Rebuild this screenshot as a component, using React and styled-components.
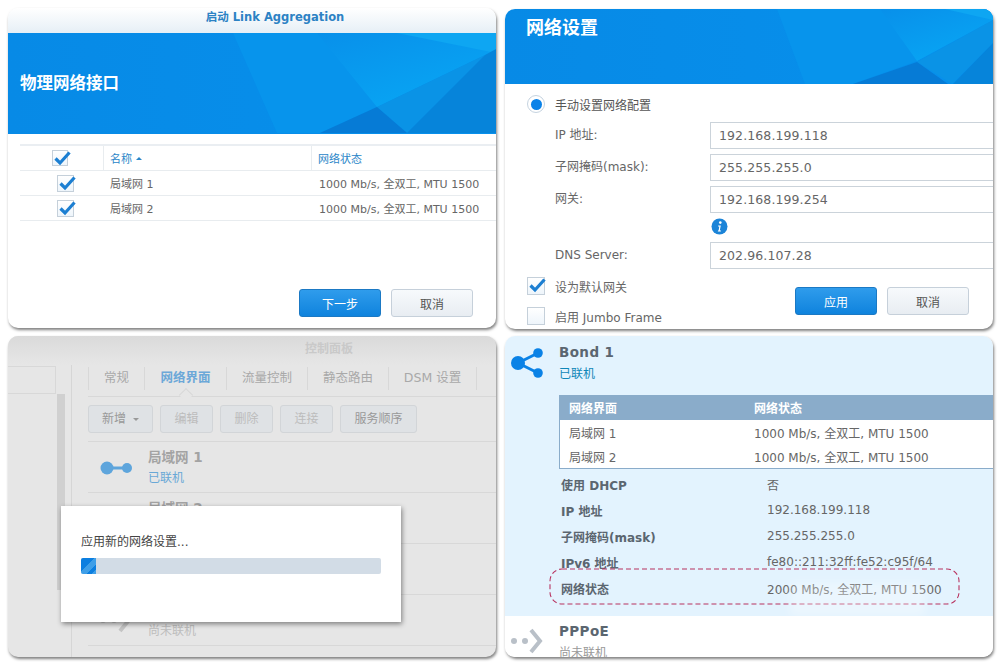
import React from 'react';
import styled, { createGlobalStyle } from 'styled-components';

const GlobalStyle = createGlobalStyle`
  html, body { margin: 0; padding: 0; background: #fff; }
  body { font-family: "DejaVu Sans", "Noto Sans CJK SC", sans-serif; color: #555; }
`;

const Page = styled.div`
  display: grid;
  grid-template-columns: 488px 488px;
  grid-template-rows: 321px 321px;
  column-gap: 9px;
  row-gap: 7px;
  padding: 8px;
  width: 1000px;
  height: 667px;
  box-sizing: border-box;
  overflow: hidden;
`;

const Panel = styled.section`
  position: relative;
  display: flex;
  flex-direction: column;
  height: ${p => p.$h || 321}px;
  margin-top: ${p => p.$top || 0}px;
  border-radius: 10px;
  overflow: hidden;
  background: ${p => p.$bg || '#fff'};
  box-shadow: 1px 2px 3px rgba(0, 0, 0, 0.5);
`;

const TitleBar = styled.div`
  flex: none;
  height: 25px;
  padding: 0 0 0 46px;
  line-height: 18px;
  text-align: center;
  font-size: 11.5px;
  font-weight: 700;
  color: #2c82c4;
  background: linear-gradient(#fff, #e6eff6);
`;

const Banner = styled.div`
  position: relative;
  flex: none;
  box-sizing: border-box;
  height: ${p => p.$h}px;
  display: flex;
  align-items: ${p => p.$align};
  padding: ${p => p.$pad};
  overflow: hidden;
  background: linear-gradient(90deg, #078ae6, #0790ec);
`;

const BannerArt = styled.svg`
  position: absolute;
  left: 0;
  top: 0;
  width: 100%;
  height: 100%;
`;

const BannerTitle = styled.h2`
  position: relative;
  margin: 0;
  font-size: ${p => p.$size}px;
  line-height: 1.2;
  font-weight: 700;
  color: #fff;
`;

const Table = styled.div`
  margin: 10px 0 0 12px;
  border-top: 2px solid #eaeef2;
  font-size: 11px;
`;

const TableRow = styled.div`
  display: grid;
  box-sizing: border-box;
  grid-template-columns: 83px 208px 1fr;
  align-items: center;
  height: ${p => p.$h}px;
  border-bottom: 1px solid #e8ecef;
`;

const CheckCell = styled.div`
  display: flex;
  padding-left: ${p => p.$indent}px;
`;

const NameCell = styled.div`
  padding-left: ${p => p.$pad}px;
  color: ${p => (p.$head ? '#2a86c8' : '#666')};
  align-self: stretch;
  display: flex;
  align-items: center;
  gap: 4px;
  border-left: ${p => (p.$head ? '1px solid #e8ecef' : '1px solid transparent')};
`;

const SortMark = styled.span`
  width: 0;
  height: 0;
  border: 3px solid transparent;
  border-top: 0;
  border-bottom: 3px solid #2a86c8;
`;

const Footer = styled.div`
  margin-top: auto;
  display: flex;
  justify-content: flex-end;
  gap: 10px;
  padding: 0 23px 11px 0;
`;

const Button = styled.button`
  width: 82px;
  height: 28px;
  padding: 0;
  border-radius: 3px;
  font: 12px "DejaVu Sans", "Noto Sans CJK SC", sans-serif;
  border: 1px solid ${p => (p.$primary ? '#1b79c4' : '#c6d0da')};
  color: ${p => (p.$primary ? '#fff' : '#555')};
  background: ${p => (p.$primary ? 'linear-gradient(#2f9cec, #0f83dd)' : 'linear-gradient(#f7fafc, #e8edf2)')};
`;

const Box = styled.span`
  position: relative;
  display: block;
  flex: none;
  box-sizing: border-box;
  width: ${p => p.$size}px;
  height: ${p => p.$size}px;
  border: 1px solid #c5d0da;
  background: linear-gradient(#fff, #eef5fb);
`;

const Tick = styled.svg`
  position: absolute;
  left: 0;
  top: -2px;
  width: 21px;
  height: 18px;
  overflow: visible;
`;

const Form = styled.div`
  display: flex;
  flex-direction: column;
  flex: 1;
  padding-top: 11px;
`;

const RadioRow = styled.div`
  display: flex;
  align-items: center;
  gap: 10px;
  margin-left: 22px;
  height: 18px;
  font-size: 12px;
  color: #555;
`;

const Radio = styled.span`
  box-sizing: border-box;
  display: flex;
  align-items: center;
  justify-content: center;
  width: 18px;
  height: 18px;
  border-radius: 50%;
  border: 1px solid #c5d3e0;
  background: #fff;
  &::after {
    content: "";
    width: 11px;
    height: 11px;
    border-radius: 50%;
    background: #0a82e8;
  }
`;

const FormGrid = styled.div`
  display: grid;
  grid-template-columns: 155px 1fr;
  row-gap: 5px;
  margin: 9px 0 0 50px;
  font-size: 12px;
`;

const FormLabel = styled.div`
  line-height: 26px;
  color: #666;
  white-space: nowrap;
`;

const Field = styled.div`
  box-sizing: border-box;
  height: 27px;
  line-height: 26px;
  padding-left: 8px;
  border: 1px solid #cbd3da;
  border-right: 0;
  background: #fff;
  color: #666;
  font-size: 12.5px;
  letter-spacing: 0.1px;
`;

const InfoRow = styled.div`
  grid-column: 2;
  height: 17px;
  margin: 0 0 2px 1px;
  display: flex;
  align-items: center;
`;

const Bottom = styled.div`
  display: flex;
  justify-content: space-between;
  margin-top: 8px;
  padding: 0 24px 0 22px;
`;

const CheckList = styled.div`
  display: flex;
  flex-direction: column;
  gap: 12px;
`;

const CheckRow = styled.div`
  display: flex;
  align-items: center;
  gap: 10px;
  height: 18px;
  font-size: 12px;
  color: #666;
`;

const BottomActions = styled.div`
  display: flex;
  gap: 10px;
  padding-top: 10px;
`;

/* control panel behind the progress dialog */
const DimBar = styled.div`
  flex: none;
  height: 29px;
  padding-left: 154px;
  line-height: 26px;
  text-align: center;
  font-size: 12px;
  font-weight: 700;
  color: #c9c9c9;
  background: linear-gradient(#dadada, #e6e6e6);
`;

const DimBody = styled.div`
  flex: 1;
  display: flex;
  min-height: 0;
`;

const Side = styled.div`
  flex: none;
  width: 63px;
  display: flex;
  flex-direction: column;
  border-right: 1px solid #d6d6d6;
`;

const SearchBox = styled.div`
  box-sizing: border-box;
  flex: none;
  width: 48px;
  height: 28px;
  margin-top: 1px;
  border: 1px solid #d8d8d8;
  border-left: 0;
`;

const SideTrack = styled.div`
  display: flex;
  justify-content: flex-end;
  padding-right: 6px;
  height: 196px;
`;

const SideThumb = styled.div`
  width: 8px;
  background: #d0d0d0;
`;

const Main = styled.div`
  flex: 1;
  margin-left: 16px;
  display: flex;
  flex-direction: column;
  min-width: 0;
`;

const Tabs = styled.div`
  flex: none;
  display: flex;
  height: 31px;
  border-bottom: 1px solid #d8d8d8;
`;

const Tab = styled.div`
  position: relative;
  box-sizing: border-box;
  width: ${p => p.$w}px;
  margin: 2px 0 6px;
  line-height: 22px;
  text-align: center;
  font-size: 12.5px;
  font-weight: ${p => (p.$active ? 700 : 400)};
  color: ${p => (p.$active ? '#6ca8d8' : '#a9a9a9')};
  border-right: 1px solid #d8d8d8;
  border-left: ${p => (p.$first ? '1px solid #d8d8d8' : '0')};
  &::after {
    content: "";
    display: ${p => (p.$active ? 'block' : 'none')};
    position: absolute;
    left: 50%;
    bottom: -10px;
    width: 9px;
    height: 9px;
    margin-left: -5px;
    background: #e6e6e6;
    border-top: 1px solid #d8d8d8;
    border-left: 1px solid #d8d8d8;
    transform: rotate(45deg);
  }
`;

const Toolbar = styled.div`
  flex: none;
  display: flex;
  gap: 7px;
  padding: 8px 0;
  border-bottom: 1px solid #d8d8d8;
`;

const DimButton = styled.div`
  box-sizing: border-box;
  width: ${p => p.$w}px;
  height: 28px;
  line-height: 26px;
  text-align: center;
  font-size: 12px;
  border: 1px solid #d2d5d8;
  border-radius: 3px;
  background: #dfe2e5;
  color: ${p => (p.$off ? '#bcbcbc' : '#999')};
`;

const Caret = styled.span`
  display: inline-block;
  vertical-align: middle;
  margin-left: 7px;
  border: 3px solid transparent;
  border-bottom: 0;
  border-top: 3px solid #999;
`;

const LanItem = styled.div`
  flex: none;
  height: 51px;
  box-sizing: border-box;
  display: flex;
  gap: 15px;
  padding: 6px 0 0 12px;
  border-bottom: 1px solid #d8d8d8;
`;

const LanIconBox = styled.div`
  flex: none;
  width: 33px;
  padding-top: ${p => p.$top}px;
`;

const LanTitle = styled.div`
  font-size: 13.5px;
  line-height: 18px;
  font-weight: 700;
  color: #a3a3a3;
`;

const LanState = styled.div`
  margin-top: 4px;
  font-size: 12px;
  line-height: 16px;
  color: ${p => (p.$on ? '#69a8d6' : '#bdbdbd')};
`;

const Dialog = styled.div`
  position: absolute;
  left: 53px;
  top: 170px;
  box-sizing: border-box;
  width: 340px;
  height: 116px;
  padding: 26px 20px 0;
  background: #fff;
  box-shadow: 1px 2px 5px rgba(0, 0, 0, 0.45);
  font-size: 12px;
  color: #444;
`;

const Progress = styled.div`
  height: 16px;
  margin-top: 9px;
  border-radius: 2px;
  overflow: hidden;
  background: #d2dce6;
`;

const ProgressFill = styled.div`
  height: 100%;
  background: linear-gradient(135deg, #0c7fe0 0 45%, #3f9fe8 45% 70%, #0c7fe0 70% 85%, #3f9fe8 85%);
`;

/* bond detail */
const BondSection = styled.div`
  position: relative;
  flex: none;
  height: 280px;
  box-sizing: border-box;
  padding-top: 7px;
  background: #e3f3fe;
`;

const ItemHead = styled.div`
  display: flex;
  gap: 16px;
  padding-left: 6px;
`;

const ItemIcon = styled.div`
  flex: none;
  width: 32px;
  padding-top: ${p => p.$top}px;
`;

const ItemTitle = styled.div`
  font-size: 13.5px;
  line-height: 18px;
  font-weight: 700;
  letter-spacing: 0.4px;
  color: #5b6670;
`;

const ItemState = styled.div`
  margin-top: 5px;
  font-size: 12px;
  line-height: 16px;
  color: ${p => p.$color};
`;

const BondTable = styled.div`
  margin: 13px 0 0 54px;
  background: #fff;
  border-left: 1px solid #8aacca;
  border-bottom: 1px solid #8aacca;
  font-size: 12px;
`;

const BondRow = styled.div`
  display: grid;
  grid-template-columns: 185px 1fr;
  align-items: center;
  height: ${p => p.$h}px;
  padding-left: 9px;
  color: ${p => (p.$head ? '#fff' : '#666')};
  font-weight: ${p => (p.$head ? 700 : 400)};
  background: ${p => (p.$head ? '#8aacca' : 'transparent')};
`;

const InfoList = styled.div`
  margin: 2px 0 0 56px;
`;

const Info = styled.div`
  position: relative;
  display: grid;
  grid-template-columns: 206px 1fr;
  align-items: center;
  height: 26px;
  font-size: 12px;
  color: #666;
`;

const InfoKey = styled.div`
  font-weight: 700;
  color: #5b6670;
`;

const MarkRing = styled.svg`
  position: absolute;
  left: -12px;
  top: -7px;
`;

const Watermark = styled.div`
  position: absolute;
  left: 285px;
  top: 246px;
  width: 135px;
  height: 34px;
  background: rgba(255, 255, 255, 0.3);
  filter: blur(5px);
`;

const PppoeSection = styled.div`
  flex: 1;
  padding-top: 6px;
  background: #fff;
`;

const CheckBox = ({ size = 17, on = true }) => (
  <Box $size={size}>
    {on && (
      <Tick viewBox="0 0 21 18">
        <path d="M2.5 9.5 L7 14 L16.5 3.5" fill="none" stroke="#1c7fd2" strokeWidth="3.2" />
      </Tick>
    )}
  </Box>
);

const Art = ({ id, w, h, shapes }) => (
  <BannerArt viewBox={`0 0 ${w} ${h}`} preserveAspectRatio="none">
    <defs>
      <linearGradient id={id} x1="0" y1="0" x2="0.7" y2="1">
        <stop offset="0" stopColor="#0890ea" />
        <stop offset="1" stopColor="#08a6f4" />
      </linearGradient>
    </defs>
    {shapes.map(([points, fill]) => (
      <polygon key={points} points={points} fill={fill === 'glow' ? `url(#${id})` : fill} />
    ))}
  </BannerArt>
);

const wizardArt = [
  ['225,0 488,0 488,20 477,22 369,74 312,100 269,100', '#0794ec'],
  ['309,0 488,0 488,20 477,22 369,74', 'glow'],
  ['389,0 488,0 488,20', '#0ea6f2'],
  ['369,74 477,22 399,100', '#0a93e6'],
  ['312,100 369,74 399,100', '#067bd6'],
  ['399,100 477,22 488,16 488,100', '#0684da'],
];

const settingsArt = [
  ['272,0 488,0 488,11 412,52 348,75 300,75', '#0794ec'],
  ['375,0 488,0 488,11 412,52', 'glow'],
  ['440,0 488,0 488,11', '#0ea6f2'],
  ['412,53 488,11 488,34 447,75', '#0a93e6'],
  ['348,75 412,53 443,75', '#067bd6'],
  ['448,75 488,34 488,75', '#0684da'],
];

const LanIcon = () => (
  <svg width="33" height="16" viewBox="0 0 33 16">
    <circle cx="7" cy="8" r="6.5" fill="#5ea5dc" />
    <circle cx="27" cy="8" r="5" fill="#5ea5dc" />
    <rect x="7" y="6.5" width="20" height="3" fill="#5ea5dc" />
  </svg>
);

const ShareIcon = () => (
  <svg width="32" height="30" viewBox="0 0 32 30">
    <path d="M7 15 L27 5 M7 15 L27 25" stroke="#0a82e6" strokeWidth="3" fill="none" />
    <circle cx="7" cy="15" r="7" fill="#0a82e6" />
    <circle cx="27" cy="5" r="4.8" fill="#0a82e6" />
    <circle cx="27" cy="25" r="4.8" fill="#0a82e6" />
  </svg>
);

const ArrowIcon = ({ color = '#b9c0c8' }) => (
  <svg width="32" height="26" viewBox="0 0 32 26">
    <circle cx="3" cy="13" r="3" fill={color} />
    <circle cx="14" cy="13" r="3" fill={color} />
    <path d="M20 2 L29 13 L20 24" stroke={color} strokeWidth="4" fill="none" />
  </svg>
);

const InfoIcon = () => (
  <svg width="17" height="17" viewBox="0 0 17 17">
    <circle cx="8.5" cy="8.5" r="8" fill="#1b84d8" />
    <circle cx="9.3" cy="4.6" r="1.3" fill="#fff" />
    <path d="M7.2 7.6 H9.8 L8.8 12.4 H10 L9.8 13.4 H6.8 L7 12.4 H7.6 L8.3 8.6 H7 Z" fill="#fff" />
  </svg>
);

const nics = [
  ['局域网 1', '1000 Mb/s, 全双工, MTU 1500'],
  ['局域网 2', '1000 Mb/s, 全双工, MTU 1500'],
];

const fields = [
  ['IP 地址:', '192.168.199.118'],
  ['子网掩码(mask):', '255.255.255.0'],
  ['网关:', '192.168.199.254'],
];

const tabs = [['常规', 57], ['网络界面', 82, true], ['流量控制', 81], ['静态路由', 81], ['DSM 设置', 88]];

const bondInfo = [
  ['使用 DHCP', '否'],
  ['IP 地址', '192.168.199.118'],
  ['子网掩码(mask)', '255.255.255.0'],
  ['IPv6 地址', 'fe80::211:32ff:fe52:c95f/64'],
];

const App = () => (
  <>
    <GlobalStyle />
    <Page>
      <Panel $h={320}>
        <TitleBar>启动 Link Aggregation</TitleBar>
        <Banner $h={101} $align="center" $pad="1px 0 0 12px">
          <Art id="wizardGlow" w={488} h={101} shapes={wizardArt} />
          <BannerTitle $size={16.5}>物理网络接口</BannerTitle>
        </Banner>
        <Table>
          <TableRow $h={25}>
            <CheckCell $indent={32}><CheckBox size={16} /></CheckCell>
            <NameCell $head $pad={6}>名称 <SortMark /></NameCell>
            <NameCell $head $pad={6}>网络状态</NameCell>
          </TableRow>
          {nics.map(([name, status]) => (
            <TableRow $h={25} key={name}>
              <CheckCell $indent={37}><CheckBox /></CheckCell>
              <NameCell $pad={6}>{name}</NameCell>
              <NameCell $pad={7}>{status}</NameCell>
            </TableRow>
          ))}
        </Table>
        <Footer>
          <Button $primary>下一步</Button>
          <Button>取消</Button>
        </Footer>
      </Panel>

      <Panel $h={320} $top={1}>
        <Banner $h={75} $align="flex-start" $pad="8px 0 0 21px">
          <Art id="settingsGlow" w={488} h={75} shapes={settingsArt} />
          <BannerTitle $size={18}>网络设置</BannerTitle>
        </Banner>
        <Form>
          <RadioRow><Radio />手动设置网络配置</RadioRow>
          <FormGrid>
            {fields.map(([label, value]) => (
              <React.Fragment key={label}>
                <FormLabel>{label}</FormLabel>
                <Field>{value}</Field>
              </React.Fragment>
            ))}
            <InfoRow><InfoIcon /></InfoRow>
            <FormLabel>DNS Server:</FormLabel>
            <Field>202.96.107.28</Field>
          </FormGrid>
          <Bottom>
            <CheckList>
              <CheckRow><CheckBox size={18} />设为默认网关</CheckRow>
              <CheckRow><CheckBox size={18} on={false} />启用 Jumbo Frame</CheckRow>
            </CheckList>
            <BottomActions>
              <Button $primary>应用</Button>
              <Button>取消</Button>
            </BottomActions>
          </Bottom>
        </Form>
      </Panel>

      <Panel $bg="#e6e6e6">
        <DimBar>控制面板</DimBar>
        <DimBody>
          <Side>
            <SearchBox />
            <SideTrack><SideThumb /></SideTrack>
          </Side>
          <Main>
            <Tabs>
              {tabs.map(([label, w, active], i) => (
                <Tab key={label} $w={w} $active={active} $first={i === 0}>{label}</Tab>
              ))}
            </Tabs>
            <Toolbar>
              <DimButton $w={65}>新增<Caret /></DimButton>
              <DimButton $w={53} $off>编辑</DimButton>
              <DimButton $w={53} $off>删除</DimButton>
              <DimButton $w={53} $off>连接</DimButton>
              <DimButton $w={77}>服务顺序</DimButton>
            </Toolbar>
            <LanItem>
              <LanIconBox $top={12}><LanIcon /></LanIconBox>
              <div>
                <LanTitle>局域网 1</LanTitle>
                <LanState $on>已联机</LanState>
              </div>
            </LanItem>
            <LanItem>
              <LanIconBox $top={12} />
              <div>
                <LanTitle>局域网 2</LanTitle>
                <LanState $on>已联机</LanState>
              </div>
            </LanItem>
            <LanItem />
            <LanItem>
              <LanIconBox $top={6}><ArrowIcon color="#c4c4c4" /></LanIconBox>
              <div>
                <LanTitle>PPPoE</LanTitle>
                <LanState>尚未联机</LanState>
              </div>
            </LanItem>
          </Main>
        </DimBody>
        <Dialog>
          应用新的网络设置...
          <Progress><ProgressFill style={{ width: '5%' }} /></Progress>
        </Dialog>
      </Panel>

      <Panel>
        <BondSection>
          <ItemHead>
            <ItemIcon $top={5}><ShareIcon /></ItemIcon>
            <div>
              <ItemTitle>Bond 1</ItemTitle>
              <ItemState $color="#0f86b8">已联机</ItemState>
            </div>
          </ItemHead>
          <BondTable>
            <BondRow $head $h={25}><span>网络界面</span><span>网络状态</span></BondRow>
            {nics.map(([name, status]) => (
              <BondRow $h={24} key={name}><span>{name}</span><span>{status}</span></BondRow>
            ))}
          </BondTable>
          <InfoList>
            {bondInfo.map(([key, value]) => (
              <Info key={key}><InfoKey>{key}</InfoKey><span>{value}</span></Info>
            ))}
            <Info>
              <InfoKey>网络状态</InfoKey>
              <span>2000 Mb/s, 全双工, MTU 1500</span>
              <MarkRing width="411" height="37" viewBox="0 0 411 37">
                <rect x="1" y="1" width="409" height="35" rx="12" fill="none" stroke="#b8325f" strokeWidth="1.1" strokeDasharray="5 3" />
              </MarkRing>
            </Info>
          </InfoList>
          <Watermark />
        </BondSection>
        <PppoeSection>
          <ItemHead>
            <ItemIcon $top={6}><ArrowIcon /></ItemIcon>
            <div>
              <ItemTitle>PPPoE</ItemTitle>
              <ItemState $color="#999">尚未联机</ItemState>
            </div>
          </ItemHead>
        </PppoeSection>
      </Panel>
    </Page>
  </>
);

export default App;
